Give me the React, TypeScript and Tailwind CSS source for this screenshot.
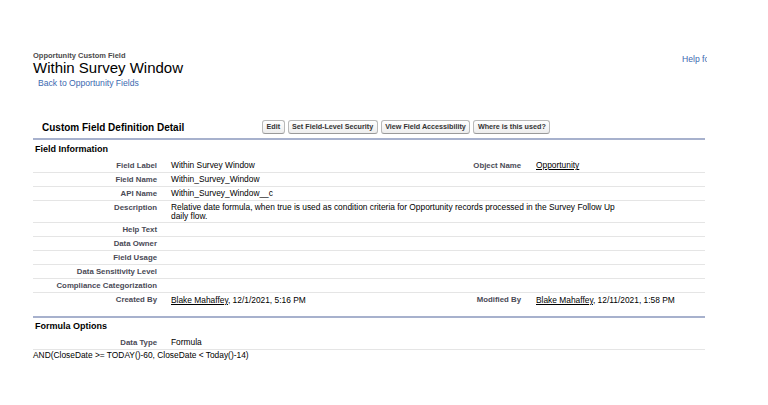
import React from 'react'

type Row = {
  label: string
  value?: React.ReactNode
  label2?: string
  value2?: React.ReactNode
  tall?: boolean
}

const Person = ({ date }: { date: string }) => (
  <span>
    <span className="underline">Blake Mahaffey</span>, {date}
  </span>
)

const rows: Row[] = [
  {
    label: 'Field Label',
    value: 'Within Survey Window',
    label2: 'Object Name',
    value2: <span className="underline">Opportunity</span>,
  },
  { label: 'Field Name', value: 'Within_Survey_Window' },
  { label: 'API Name', value: 'Within_Survey_Window__c' },
  {
    label: 'Description',
    value:
      'Relative date formula, when true is used as condition criteria for Opportunity records processed in the Survey Follow Up daily flow.',
    tall: true,
  },
  { label: 'Help Text' },
  { label: 'Data Owner' },
  { label: 'Field Usage' },
  { label: 'Data Sensitivity Level' },
  { label: 'Compliance Categorization' },
  {
    label: 'Created By',
    value: <Person date="12/1/2021, 5:16 PM" />,
    label2: 'Modified By',
    value2: <Person date="12/11/2021, 1:58 PM" />,
  },
]

const buttons = ['Edit', 'Set Field-Level Security', 'View Field Accessibility', 'Where is this used?']

function DetailRow({ row, last }: { row: Row; last: boolean }) {
  const border = last ? '' : 'border-b border-[#e5e5e5]'
  if (row.tall) {
    return (
      <div className={`flex h-[22px] items-start pt-[2px] ${border}`}>
        <div className="w-[124px] shrink-0 text-right text-[7.8px] font-bold leading-[9px] text-[#4a4a56]">
          {row.label}
        </div>
        <div className="w-[464px] pl-[14px] text-[8.4px] leading-[9px] text-black">{row.value}</div>
      </div>
    )
  }
  return (
    <div className={`flex h-[14px] items-center ${border}`}>
      <div className="w-[124px] shrink-0 whitespace-nowrap text-right text-[7.8px] font-bold text-[#4a4a56]">
        {row.label}
      </div>
      <div className="w-[306px] shrink-0 whitespace-nowrap pl-[14px] text-[8.4px] text-black">{row.value}</div>
      <div className="w-[58px] shrink-0 whitespace-nowrap text-right text-[7.8px] font-bold text-[#4a4a56]">
        {row.label2}
      </div>
      <div className="flex-1 whitespace-nowrap pl-[15px] text-[8.4px] text-black">{row.value2}</div>
    </div>
  )
}

export default function App() {
  return (
    <div className="h-[405px] w-[768px] overflow-hidden bg-white font-['Liberation_Sans',Arial,sans-serif]">
      <div className="ml-[33px] w-[672px]">
        {/* page header */}
        <div className="flex">
          <div className="w-[649px] shrink-0 pt-[51px]">
            <div className="text-[7.5px] font-bold leading-[9px] text-[#4a4a4a]">Opportunity Custom Field</div>
            <div className="text-[15px] leading-[15px] text-black">Within Survey Window</div>
            <div className="mt-[3px] pl-[5px] text-[8.6px] leading-[10px] text-[#3b69b0]">Back to Opportunity Fields</div>
          </div>
          <div className="w-[25px] shrink-0 overflow-hidden whitespace-nowrap pt-[54px] text-[8.6px] leading-[10px] text-[#3b69b0]">
            Help for this Page
          </div>
        </div>

        {/* detail block header */}
        <div className="mt-[31px] flex h-[21px] items-start border-b-2 border-[#a7b1cd]">
          <div className="flex h-[16px] w-[229px] shrink-0 items-center pl-[9px] text-[10px] font-bold text-black">
            Custom Field Definition Detail
          </div>
          <div className="flex h-[16px] items-center gap-[3px]">
            {buttons.map((b) => (
              <div
                key={b}
                className="flex h-[14px] items-center rounded-[3px] border border-[#b9b9b9] border-b-[#9a9a9a] bg-gradient-to-b from-white to-[#ededed] px-[3.5px] text-[7.2px] font-bold text-[#333]"
              >
                {b}
              </div>
            ))}
          </div>
        </div>

        <div className="mt-[3px] h-[12px] pl-[2px] text-[9px] font-bold leading-[12px] text-black">Field Information</div>
        <div className="mt-[4px]">
          {rows.map((r, i) => (
            <DetailRow key={r.label} row={r} last={i === rows.length - 1} />
          ))}
        </div>

        {/* formula options */}
        <div className="mt-[9px] border-t-2 border-[#a7b1cd]">
          <div className="mt-[2px] h-[12px] pl-[2px] text-[9px] font-bold leading-[12px] text-black">Formula Options</div>
          <div className="mt-[4px]">
            <DetailRow row={{ label: 'Data Type', value: 'Formula' }} last={false} />
          </div>
          <div className="text-[8.4px] leading-[10px] text-black">AND(CloseDate &gt;= TODAY()-60, CloseDate &lt; Today()-14)</div>
        </div>
      </div>
    </div>
  )
}
